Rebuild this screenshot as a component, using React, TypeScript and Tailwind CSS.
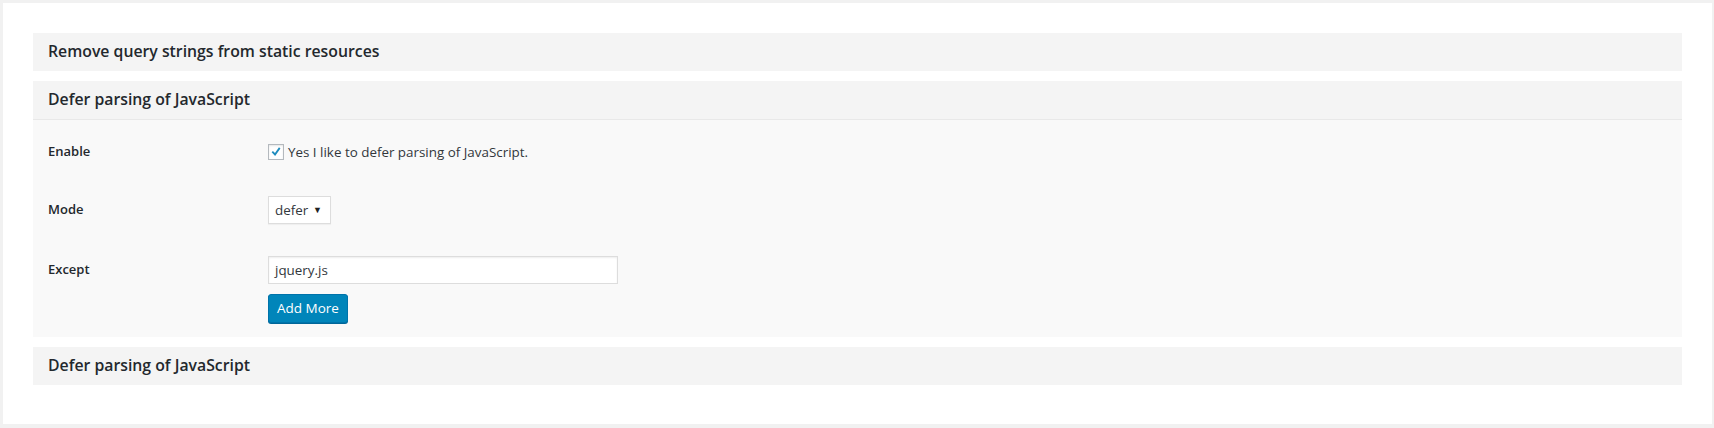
import React from "react";

const font = { fontFamily: '"Open Sans", "Noto Sans", "Liberation Sans", sans-serif' };

function Header({ title, border }: { title: string; border?: boolean }) {
  return (
    <div
      className={`flex items-center pl-[15px] bg-[#f4f4f4] text-[15.8px] font-semibold text-[#23282d] ${
        border ? "border-b border-[#e8e8e8] h-[39px]" : "h-[38px]"
      }`}
    >
      {title}
    </div>
  );
}

export default function App() {
  return (
    <div className="w-[1714px] h-[428px] bg-[#f1f1f1] pl-[3px] pr-[2px] pt-[3px] pb-[4px]" style={font}>
      <div className="bg-white h-full pt-[30px] px-[30px] flex flex-col gap-[10px]">
        <Header title="Remove query strings from static resources" />
        <div className="flex flex-col">
          <Header title="Defer parsing of JavaScript" border />
          <div className="bg-[#f9f9f9] pl-[15px] pt-[24px] pb-[14px] flex flex-col text-[14px] text-[#23282d]">
            <div className="flex items-center h-[16px]">
              <div className="w-[220px] font-semibold text-[13px]">Enable</div>
              <label className="flex items-center gap-[4px] text-[13.4px] text-[#32373c]">
                <span className="w-[16px] h-[16px] border border-[#b4b9be] bg-white flex items-center justify-center shadow-[inset_0_1px_2px_rgba(0,0,0,0.1)]">
                  <svg width="16" height="16" viewBox="0 0 16 16">
                    <path d="M3 8.2l1.5-1.4 2.3 2.3 4.6-6.4 1.7 1.2-6.1 8.6z" fill="#1e8cbe" />
                  </svg>
                </span>
                Yes I like to defer parsing of JavaScript.
              </label>
            </div>
            <div className="flex items-center h-[28px] mt-[36px]">
              <div className="w-[220px] font-semibold text-[13px]">Mode</div>
              <div className="w-[63px] h-[28px] border border-[#dddddd] bg-white flex items-center pl-[6px] pr-[8px] justify-between text-[13.4px] text-[#32373c] shadow-[0_1px_1px_rgba(0,0,0,0.04)]">
                <span>defer</span>
                <span className="text-[9px] text-[#222]">▼</span>
              </div>
            </div>
            <div className="flex items-center h-[28px] mt-[32px]">
              <div className="w-[220px] font-semibold text-[13px]">Except</div>
              <div className="w-[350px] h-[28px] border border-[#dddddd] bg-white flex items-center pl-[6px] text-[13.4px] text-[#32373c] shadow-[inset_0_1px_2px_rgba(0,0,0,0.07)]">
                jquery.js
              </div>
            </div>
            <div className="flex mt-[10px] pl-[220px]">
              <button className="w-[80px] h-[29px] bg-[#0085ba] border border-[#0073aa] rounded-[3px] text-white text-[13.5px] shadow-[0_1px_0_#006799] flex items-center justify-center">
                Add More
              </button>
            </div>
          </div>
        </div>
        <Header title="Defer parsing of JavaScript" />
      </div>
    </div>
  );
}
